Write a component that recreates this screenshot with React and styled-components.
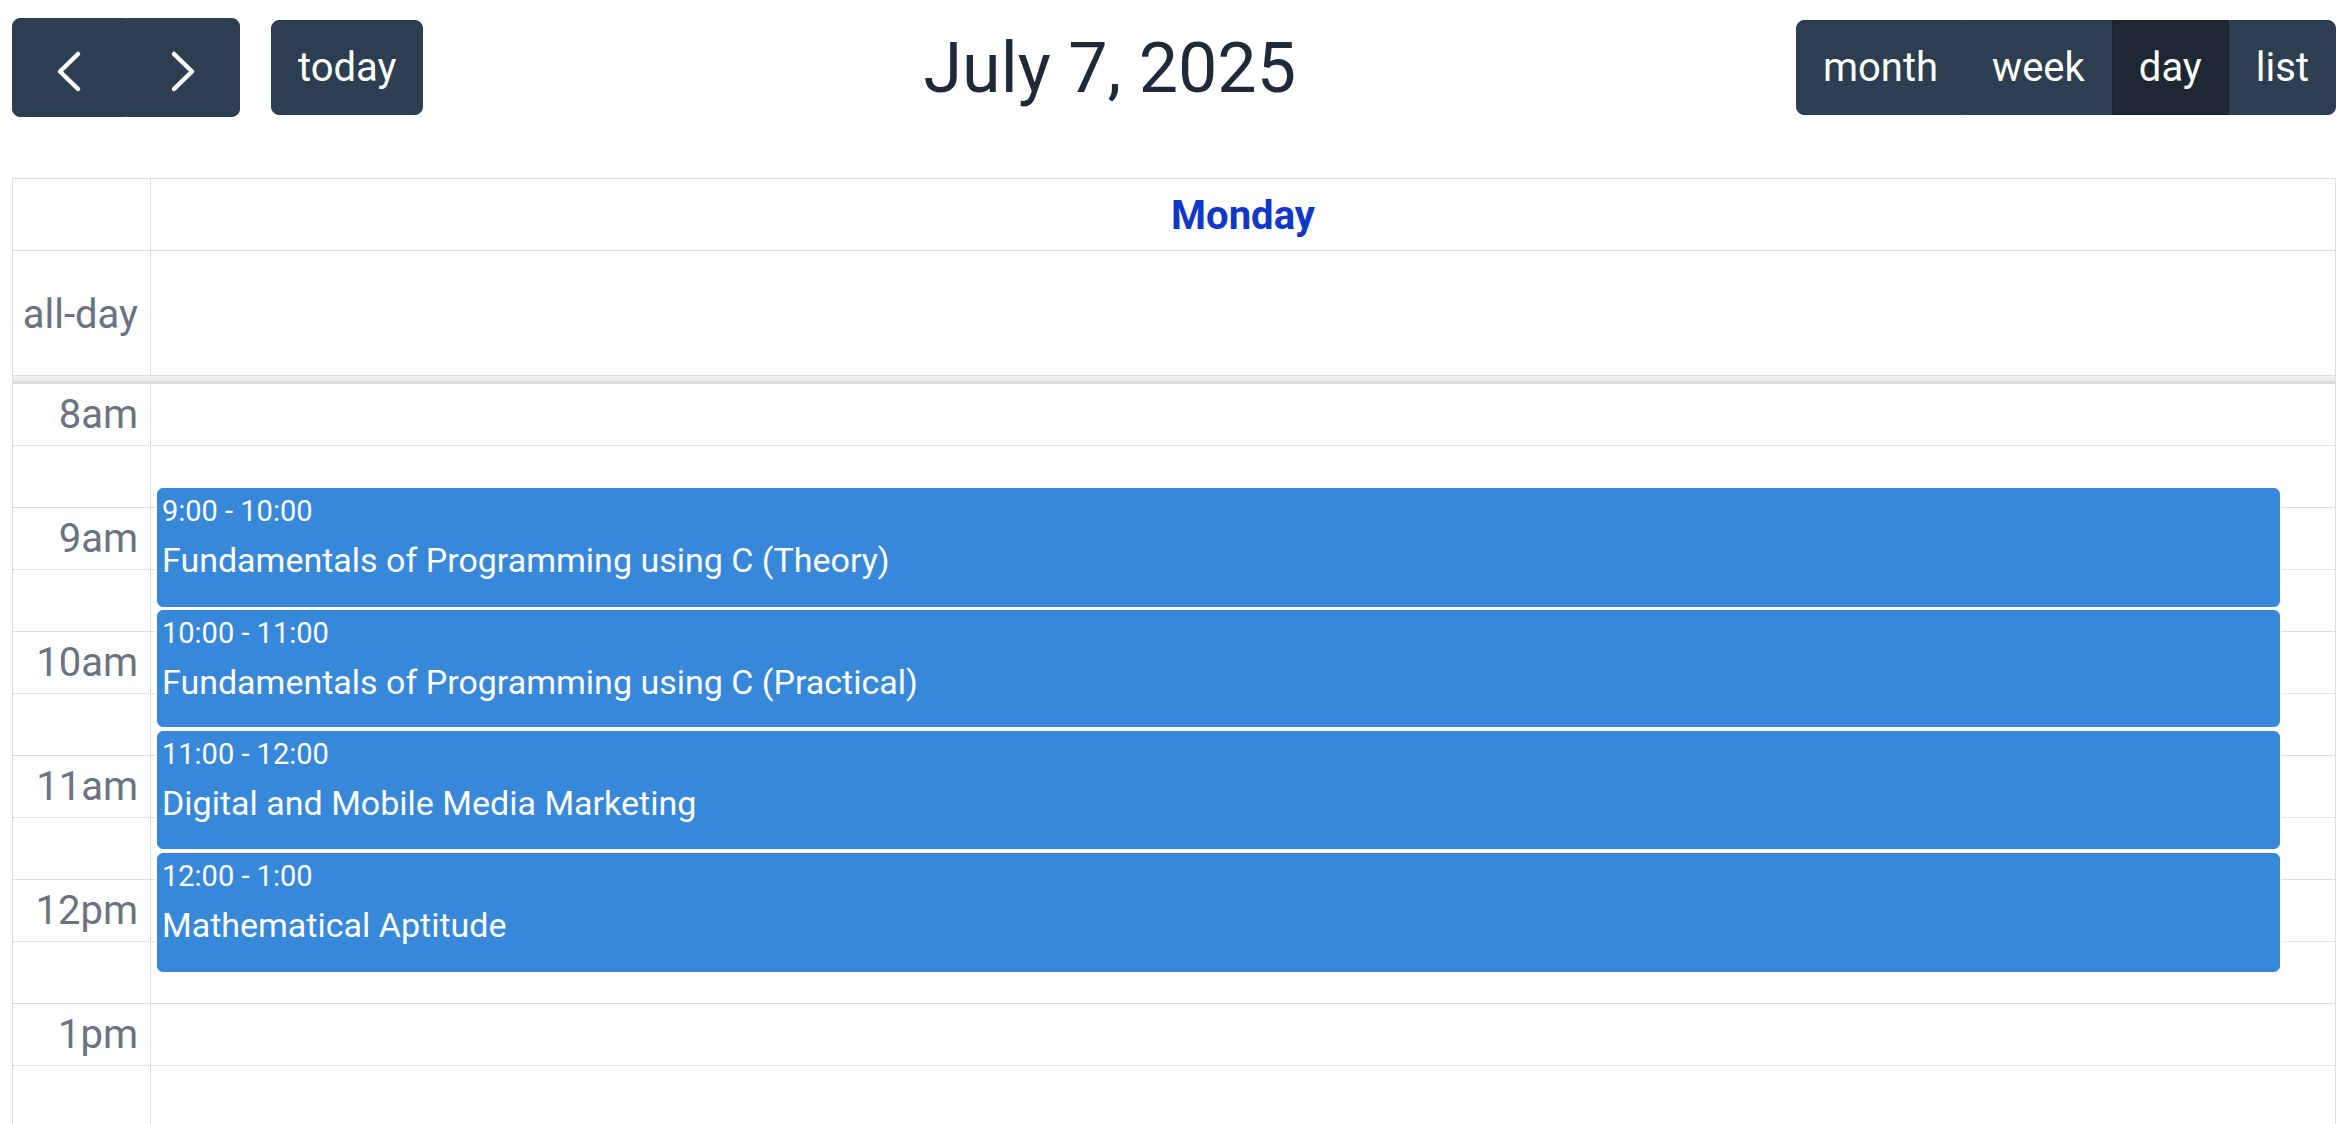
import React from "react";
import styled, { createGlobalStyle, css } from "styled-components";

const GlobalStyle = createGlobalStyle`
  html, body {
    margin: 0;
    overflow: hidden;
    background: #fff;
  }
  body {
    font-family: Roboto, "Liberation Sans", sans-serif;
    color: #1f2937;
  }
`;

const Page = styled.div`
  padding: 18px 16px 0 12px;
`;

const Toolbar = styled.div`
  display: flex;
  justify-content: space-between;
  align-items: center;
  margin-bottom: 61px;
`;

const Chunk = styled.div`
  display: flex;
  align-items: center;
  gap: 31px;
`;

const Group = styled.div`
  display: inline-flex;
  align-items: stretch;

  & > button {
    border-radius: 0;
  }
  & > button:first-child {
    border-top-left-radius: 8px;
    border-bottom-left-radius: 8px;
  }
  & > button:last-child {
    border-top-right-radius: 8px;
    border-bottom-right-radius: 8px;
  }
`;

const Button = styled.button`
  font-family: Roboto, "Liberation Sans", sans-serif;
  font-size: 40px;
  line-height: 60px;
  padding: 16.5px 26px;
  color: #fff;
  background: #2c3e50;
  border: 1px solid #2c3e50;
  border-radius: 8px;
  cursor: pointer;
  display: inline-flex;
  align-items: center;
  justify-content: center;

  ${(p) =>
    p.$active &&
    css`
      background: #1e2833;
      border-color: #1a232d;
    `}
`;

const IconButton = styled(Button)`
  padding: 18.5px 26px;
`;

const Title = styled.h2`
  margin: 0;
  font-size: 70px;
  font-weight: 400;
  line-height: 1.2;
  color: #1f2937;
`;

const Calendar = styled.div`
  border: 1px solid #ddd;
  border-bottom: none;
`;

const Row = styled.div`
  display: grid;
  grid-template-columns: 138px 1fr;
`;

const AxisCell = styled.div`
  border-right: 1px solid #ddd;
  color: #6b7280;
  font-size: 40px;
  text-align: right;
  padding-right: 12px;
`;

const HeaderRow = styled(Row)`
  height: 71px;
  border-bottom: 1px solid #ddd;
`;

const DayHeader = styled.div`
  text-align: center;
  font-size: 40px;
  font-weight: 700;
  color: #0f37c8;
  padding-top: 4px;
  line-height: 66px;
`;

const AllDayRow = styled(Row)`
  height: 124px;
  border-bottom: 1px solid #ddd;
`;

const AllDayLabel = styled(AxisCell)`
  display: flex;
  align-items: center;
  justify-content: flex-end;
  line-height: 60px;
  padding-top: 4px;
`;

const Divider = styled.div`
  height: 5px;
  background: #eee;
  border-bottom: 3px solid #ddd;
`;

const Body = styled.div`
  position: relative;
`;

const SlotRow = styled(Row)`
  height: 61px;
  border-bottom: ${(p) => (p.$hourEnd ? "1px solid #ddd" : "1px dotted #cfcfcf")};
`;

const SlotLabel = styled(AxisCell)`
  line-height: 60px;
  padding-top: 1px;
`;

const EventLayer = styled.div`
  position: absolute;
  top: 0;
  bottom: 0;
  left: 138px;
  right: 0;
`;

const Event = styled.div`
  position: absolute;
  left: 6px;
  right: 2.5%;
  box-sizing: border-box;
  background: #3788d8;
  border: 1px solid #3788d8;
  border-radius: 6px;
  box-shadow: 0 0 0 1.5px #fff;
  padding: 1px 4px;
  color: #fff;
  overflow: hidden;
`;

const EventTime = styled.div`
  font-size: 29px;
  line-height: 43.5px;
  margin-bottom: 1px;
  white-space: nowrap;
`;

const EventTitle = styled.div`
  font-size: 34px;
  line-height: 51px;
  white-space: nowrap;
`;

const Chevron = ({ dir }) => (
  <svg width="60" height="60" viewBox="0 0 60 60" fill="none">
    <polyline
      points={dir === "left" ? "39,16 21,33.5 39,51" : "21,16 39,33.5 21,51"}
      stroke="#fff"
      strokeWidth="4.5"
      strokeLinecap="round"
      strokeLinejoin="round"
    />
  </svg>
);

const hours = ["8am", "9am", "10am", "11am", "12pm", "1pm"];

const events = [
  { time: "9:00 - 10:00", title: "Fundamentals of Programming using C (Theory)", top: 104, height: 119 },
  { time: "10:00 - 11:00", title: "Fundamentals of Programming using C (Practical)", top: 226, height: 117 },
  { time: "11:00 - 12:00", title: "Digital and Mobile Media Marketing", top: 347, height: 118 },
  { time: "12:00 - 1:00", title: "Mathematical Aptitude", top: 469, height: 119 },
];

const App = () => {
  return (
    <Page>
      <GlobalStyle />
      <Toolbar>
        <Chunk>
          <Group>
            <IconButton aria-label="prev">
              <Chevron dir="left" />
            </IconButton>
            <IconButton aria-label="next">
              <Chevron dir="right" />
            </IconButton>
          </Group>
          <Button>today</Button>
        </Chunk>
        <Title>July 7, 2025</Title>
        <Chunk>
          <Group>
            <Button>month</Button>
            <Button>week</Button>
            <Button $active>day</Button>
            <Button>list</Button>
          </Group>
        </Chunk>
      </Toolbar>

      <Calendar>
        <HeaderRow>
          <AxisCell />
          <DayHeader>Monday</DayHeader>
        </HeaderRow>
        <AllDayRow>
          <AllDayLabel>all-day</AllDayLabel>
          <div />
        </AllDayRow>
        <Divider />
        <Body>
          {hours.map((h) => (
            <React.Fragment key={h}>
              <SlotRow>
                <SlotLabel>{h}</SlotLabel>
                <div />
              </SlotRow>
              <SlotRow $hourEnd>
                <AxisCell />
                <div />
              </SlotRow>
            </React.Fragment>
          ))}
          <EventLayer>
            {events.map((ev) => (
              <Event key={ev.time} style={{ top: ev.top, height: ev.height }}>
                <EventTime>{ev.time}</EventTime>
                <EventTitle>{ev.title}</EventTitle>
              </Event>
            ))}
          </EventLayer>
        </Body>
      </Calendar>
    </Page>
  );
};

export default App;
